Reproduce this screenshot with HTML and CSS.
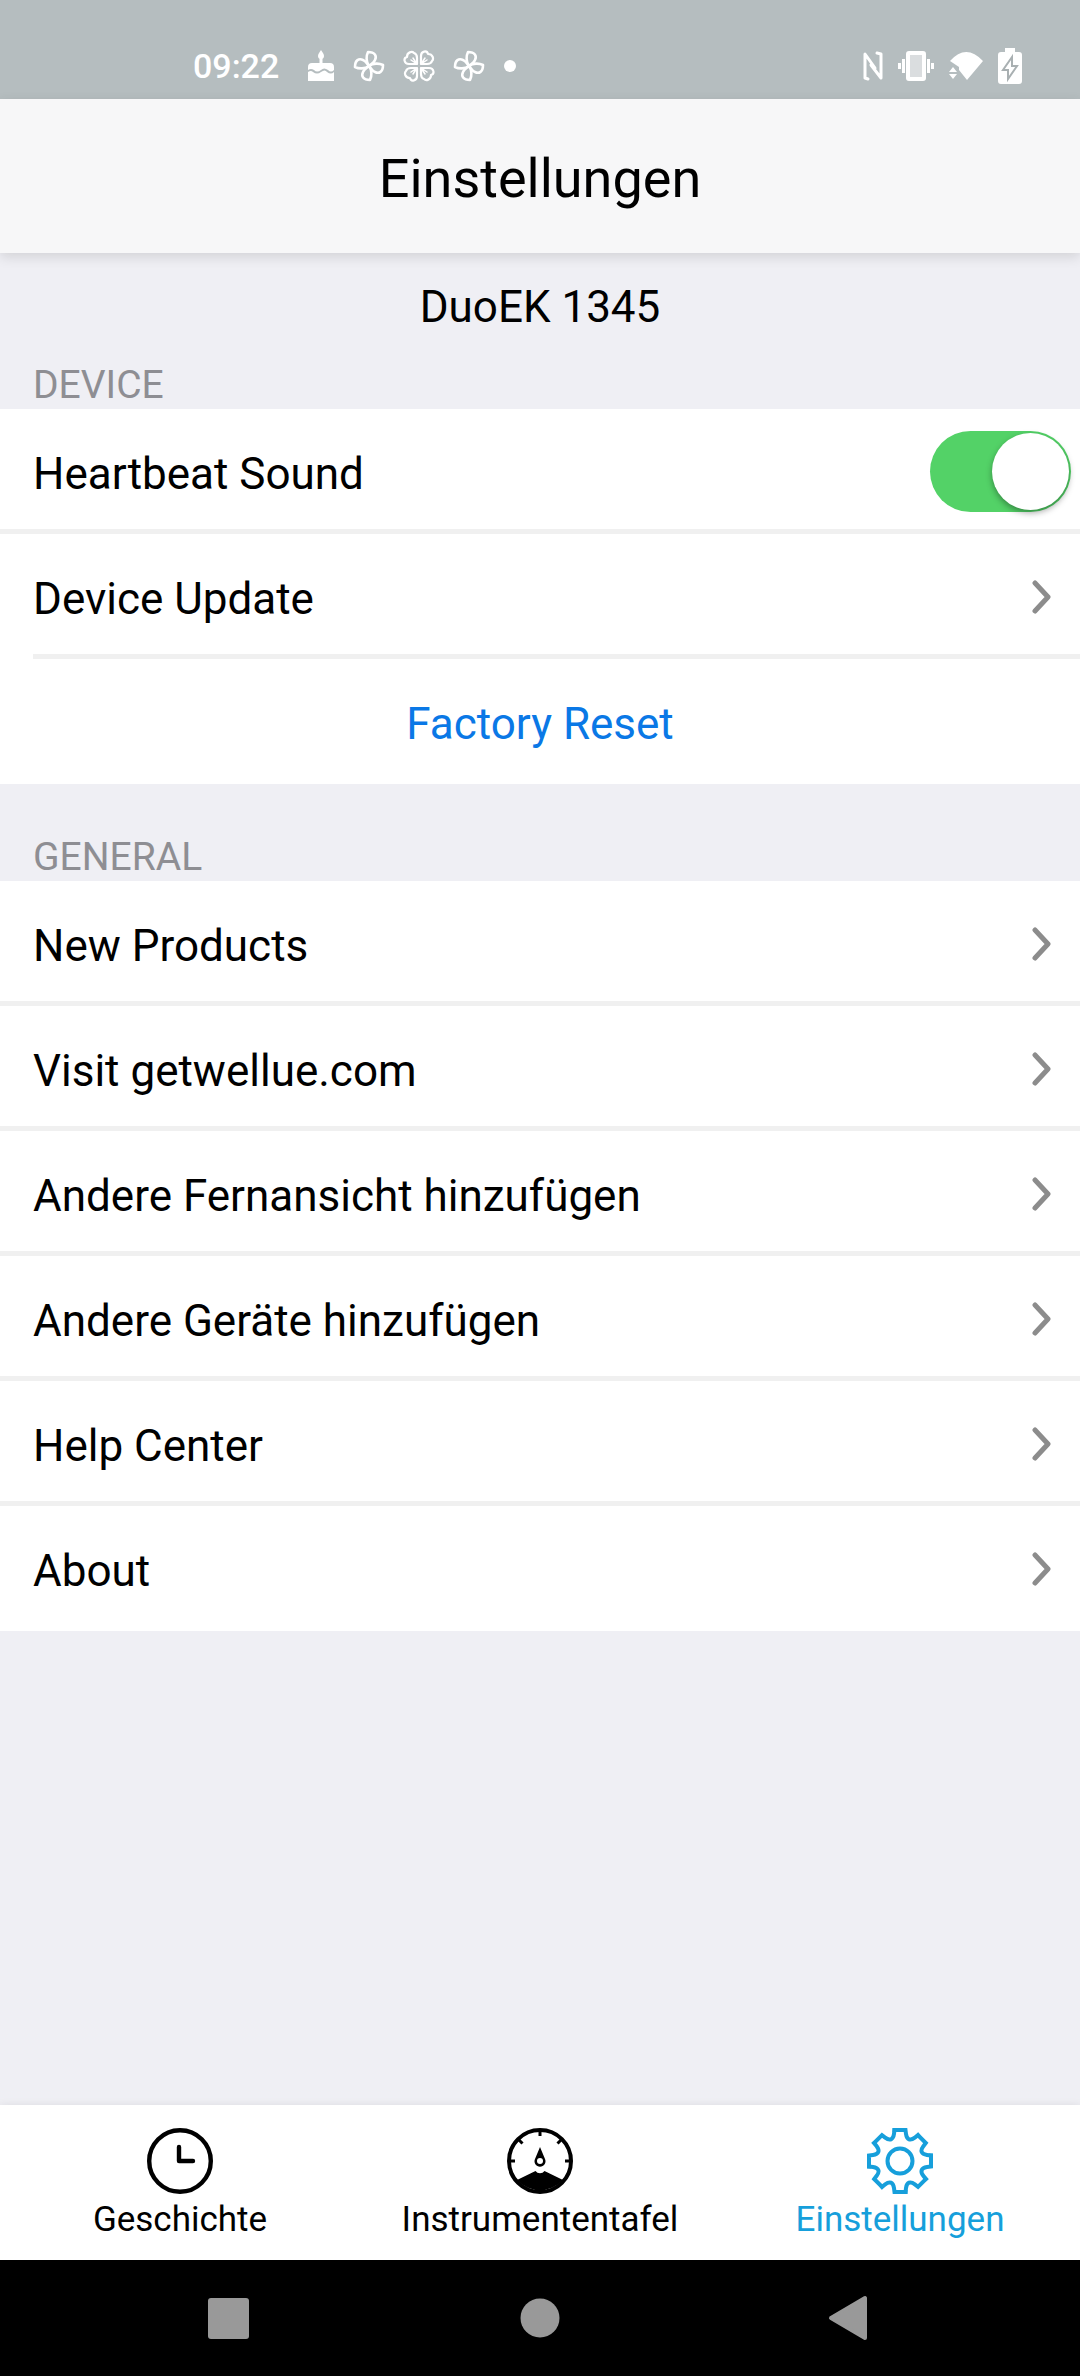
FILE: index.html
```html
<!DOCTYPE html>
<html lang="de">
  <head>
    <meta charset="UTF-8" />
    <meta name="viewport" content="width=device-width, initial-scale=1.0" />
    <title>Einstellungen</title>
    <link rel="stylesheet" href="styles.css">
  </head>
  <body>
    <!-- shared shapes -->
    <svg class="defs" width="0" height="0" aria-hidden="true">
      <symbol id="chevron" viewBox="0 0 20 34">
        <path d="M3 3L16 17L3 31" fill="none" stroke="#8c8c8c" stroke-width="5" stroke-linecap="round" stroke-linejoin="round" />
      </symbol>
      <symbol id="fan" viewBox="0 0 32 32">
        <g fill="none" stroke="#fff" stroke-width="2.6" stroke-linejoin="round">
          <path id="blade" d="M16 16C13 12 13 6 15 2C22 2 24 6 22 10C21 13 18 14 16 16Z" />
          <use href="#blade" transform="rotate(90 16 16)" />
          <use href="#blade" transform="rotate(180 16 16)" />
          <use href="#blade" transform="rotate(270 16 16)" />
        </g>
      </symbol>
    </svg>

    <div class="status-bar">
      <span class="time">09:22</span>
      <svg width="28" height="32" viewBox="0 0 28 32" fill="#fff">
        <path d="M14 0C16 3 17 4 17 6A3 3 0 0 1 11 6C11 4 12 3 14 0Z" />
        <path d="M12.5 8H15.5V13H23Q27 13 27 17V20Q24 23 21 20Q17 17 14 20Q10 23 7 20Q4 18 1 20V17Q1 13 5 13H12.5Z" />
        <path d="M1 22Q4 20 6 22Q10 25 14 22Q18 19 20 22Q24 25 27 22V31H1Z" />
      </svg>
      <svg width="32" height="32"><use href="#fan" /></svg>
      <svg width="32" height="32" viewBox="0 0 32 32" fill="none" stroke="#fff" stroke-width="2.2" stroke-linejoin="round" stroke-linecap="round">
        <g id="leaf">
          <path d="M14 14H6C1 14 0 8 4 7C4 2 9 1 11 3Q14 4 14 8Z" />
          <path d="M8 10L14 14L10 8" stroke-width="1.5" />
        </g>
        <use href="#leaf" transform="rotate(90 16 16)" />
        <use href="#leaf" transform="rotate(180 16 16)" />
        <use href="#leaf" transform="rotate(270 16 16)" />
      </svg>
      <svg width="32" height="32"><use href="#fan" /></svg>
      <svg width="14" height="32" viewBox="0 0 14 32"><circle cx="7" cy="16" r="6" fill="#fff" /></svg>

      <div class="status-right">
        <svg width="20" height="30" viewBox="0 0 20 30" fill="none" stroke="#fff" stroke-width="3" stroke-linejoin="round" stroke-linecap="round">
          <path d="M5 28L2 27V3L12 17M14 2L18 3V27L8 14" />
        </svg>
        <svg width="36" height="30" viewBox="0 0 36 30" fill="none" stroke="#fff" stroke-width="3">
          <rect x="10" y="2" width="16" height="26" rx="1" fill="#dadddf" stroke-width="4" />
          <path d="M5.5 8V22M30.5 8V22M1.5 12V18M34.5 12V18" />
        </svg>
        <svg width="34" height="30" viewBox="0 0 34 30" fill="#fff">
          <path d="M1 10Q17 -8 34 10L18 29L10 19V16L7 14Z" />
          <path d="M4 16L8 21H0ZM4 28L8 23H0Z" />
        </svg>
        <svg width="24" height="36" viewBox="0 0 24 36">
          <path d="M7 0H17V4H21Q24 4 24 7V33Q24 36 21 36H3Q0 36 0 33V7Q0 4 3 4H7Z" fill="#fff" />
          <path d="M14 9L5 22H10V31L19 18H14Z" fill="#fff" stroke="#a9b0b2" stroke-width="2" />
        </svg>
      </div>
    </div>

    <header class="header">
      <h1>Einstellungen</h1>
    </header>

    <main class="content">
      <p class="device-name">DuoEK 1345</p>

      <h2 class="section-title">DEVICE</h2>
      <ul class="list">
        <li>
          <label class="row" for="heartbeat">
            <span class="row-text">Heartbeat Sound</span>
            <input type="checkbox" class="switch" id="heartbeat" checked />
          </label>
        </li>
        <li>
          <a class="row" href="#update">
            <span class="row-text">Device Update</span>
            <svg class="chevron"><use href="#chevron" /></svg>
          </a>
        </li>
        <li class="inset">
          <button type="button" class="row reset"><span class="row-text">Factory Reset</span></button>
        </li>
      </ul>

      <h2 class="section-title general">GENERAL</h2>
      <ul class="list">
        <li>
          <a class="row" href="#products">
            <span class="row-text">New Products</span>
            <svg class="chevron"><use href="#chevron" /></svg>
          </a>
        </li>
        <li>
          <a class="row" href="#visit">
            <span class="row-text">Visit getwellue.com</span>
            <svg class="chevron"><use href="#chevron" /></svg>
          </a>
        </li>
        <li>
          <a class="row" href="#remote">
            <span class="row-text">Andere Fernansicht hinzufügen</span>
            <svg class="chevron"><use href="#chevron" /></svg>
          </a>
        </li>
        <li>
          <a class="row" href="#devices">
            <span class="row-text">Andere Geräte hinzufügen</span>
            <svg class="chevron"><use href="#chevron" /></svg>
          </a>
        </li>
        <li>
          <a class="row" href="#help">
            <span class="row-text">Help Center</span>
            <svg class="chevron"><use href="#chevron" /></svg>
          </a>
        </li>
        <li>
          <a class="row" href="#about">
            <span class="row-text">About</span>
            <svg class="chevron"><use href="#chevron" /></svg>
          </a>
        </li>
      </ul>
    </main>

    <nav class="tabs">
      <a class="tab" href="#history">
        <svg width="66" height="66" viewBox="0 0 66 66" fill="none" stroke="currentColor" stroke-width="4.4">
          <circle cx="33" cy="33" r="30.8" />
          <path d="M32 19V33H46" stroke-linecap="round" stroke-linejoin="round" />
        </svg>
        Geschichte
      </a>
      <a class="tab" href="#dashboard">
        <svg width="66" height="66" viewBox="0 0 66 66">
          <g fill="none" stroke="currentColor" stroke-width="3">
            <circle cx="33" cy="33" r="31" stroke-width="4" />
            <path d="M33 2V8M2 33H8M58 33H64M11 11L15.5 15.5M55 11L50.5 15.5" />
          </g>
          <path d="M33 19L38 31A5.5 5.5 0 1 1 28 31Z" fill="currentColor" />
          <circle cx="33" cy="33" r="3" fill="#fff" />
          <path d="M10 52L28.500 43A5.5 5.5 0 0 0 37.5 43L56 52A31 31 0 0 1 10 52Z" fill="currentColor" />
        </svg>
        Instrumententafel
      </a>
      <a class="tab active" href="#settings">
        <svg width="66" height="66" viewBox="-33 -33 66 66" fill="none" stroke="currentColor" stroke-width="4">
          <path id="tooth" d="M-5.5 -31H5.5L6 -27C6.5 -23.5 7.5 -22.3 9 -21.7C10.5 -21.1 12 -21.2 14.8 -23.3L18 -25.8" stroke-linecap="square" />
          <use href="#tooth" transform="rotate(45)" />
          <use href="#tooth" transform="rotate(90)" />
          <use href="#tooth" transform="rotate(135)" />
          <use href="#tooth" transform="rotate(180)" />
          <use href="#tooth" transform="rotate(225)" />
          <use href="#tooth" transform="rotate(270)" />
          <use href="#tooth" transform="rotate(315)" />
          <circle r="12.5" />
        </svg>
        Einstellungen
      </a>
    </nav>

    <div class="nav-bar">
      <button type="button" aria-label="Recents">
        <svg width="48" height="48" viewBox="0 0 48 48" fill="#999"><rect x="4" y="4" width="41" height="41" rx="3" /></svg>
      </button>
      <button type="button" aria-label="Home">
        <svg width="48" height="48" viewBox="0 0 48 48" fill="#999"><circle cx="24" cy="24" r="19.5" /></svg>
      </button>
      <button type="button" aria-label="Back">
        <svg width="48" height="48" viewBox="0 0 48 48" fill="#999" stroke="#999" stroke-width="4" stroke-linejoin="round"><path d="M3 24L37 4V44Z" /></svg>
      </button>
    </div>
  </body>
</html>
```
FILE: styles.css
```css
* {
  box-sizing: border-box;
}
body {
  margin: 0;
  min-height: 100vh;
  display: flex;
  flex-direction: column;
  background-color: #efeff4;
  color: #000;
  font-family: Roboto, sans-serif;
  font-size: 44px;
  line-height: 52px;
}
svg {
  display: block;
  flex-shrink: 0;
}
.defs {
  position: absolute;
}
h1, h2, p, ul {
  margin: 0;
  padding: 0;
  font-weight: 400;
}
a {
  color: inherit;
  text-decoration: none;
}
button {
  padding: 0;
  border: none;
  background: none;
  font: inherit;
}

/* status bar */
.status-bar {
  display: flex;
  align-items: center;
  gap: 18px;
  height: 99px;
  padding: 32px 58px 0 193px;
  background-color: #b5bdbf;
  color: #fff;
}
.time {
  margin-right: 10px;
  font-size: 34px;
  font-weight: 500;
  line-height: 40px;
}
.status-right {
  display: flex;
  align-items: center;
  gap: 15px;
  margin-left: auto;
}

/* title */
.header {
  display: flex;
  align-items: center;
  justify-content: center;
  height: 154px;
  padding-top: 5px;
  background-color: #f7f7f8;
  box-shadow: 0 4px 12px rgba(0, 0, 0, 0.12);
}
h1 {
  font-size: 54px;
  line-height: 64px;
}

/* settings lists */
.content {
  flex: 1;
}
.device-name {
  padding-top: 28px;
  text-align: center;
}
.section-title {
  padding: 29px 33px 1px;
  color: #8e8e93;
  font-size: 39px;
  line-height: 46px;
}
.general {
  padding-top: 50px;
}
.list {
  padding-bottom: 5px;
  background-color: #fff;
  list-style: none;
}
.list li + li {
  border-top: 5px solid #f0f0f0;
}
.list .inset {
  margin-left: 33px;
}
.row {
  display: flex;
  align-items: center;
  justify-content: space-between;
  width: 100%;
  height: 120px;
  padding: 5px 28px 0 33px;
}
.row-text {
  padding-top: 5px;
}
.reset {
  justify-content: center;
  padding: 5px 33px 0 0;
  color: #0a78e6;
}
.chevron {
  width: 20px;
  height: 34px;
}
.switch {
  appearance: none;
  width: 141px;
  height: 81px;
  margin: 0 -19px 0 0;
  padding: 2px;
  border-radius: 41px;
  background-color: #53d267;
}
.switch::before {
  content: "";
  display: block;
  width: 77px;
  height: 77px;
  border-radius: 50%;
  background-color: #fff;
  box-shadow: 0 3px 6px rgba(0, 0, 0, 0.35);
}
.switch:checked::before {
  margin-left: auto;
}

/* bottom tabs */
.tabs {
  display: flex;
  height: 155px;
  background-color: #fff;
  box-shadow: 0 0 8px rgba(0, 0, 0, 0.08);
}
.tab {
  flex: 1;
  display: flex;
  flex-direction: column;
  align-items: center;
  gap: 6px;
  padding-top: 23px;
  font-size: 35px;
  line-height: 40px;
}
.active {
  color: #169fdb;
}

/* system buttons */
.nav-bar {
  display: flex;
  height: 116px;
  padding: 0 72px;
  background-color: #000;
}
.nav-bar button {
  flex: 1;
  display: flex;
  align-items: center;
  justify-content: center;
}
```
